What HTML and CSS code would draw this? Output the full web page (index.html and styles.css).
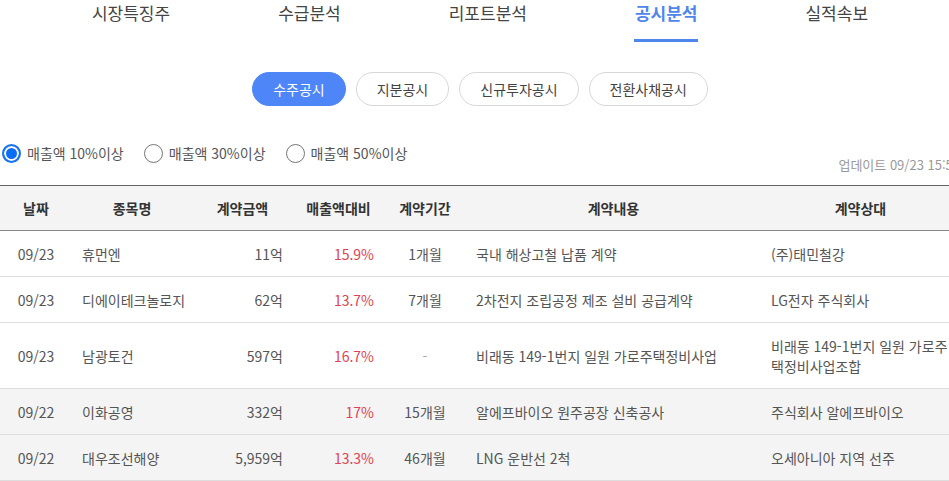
FILE: index.html
```html
<!DOCTYPE html>
<html lang="ko">

<head>
    <meta charset="UTF-8">
    <meta name="viewport" content="width=device-width, initial-scale=1.0">
    <title>공시분석</title>
    <link rel="stylesheet" href="styles.css">
</head>

<body>
    <div class="wrap">
        <ul class="tabs">
            <li>시장특징주</li>
            <li>수급분석</li>
            <li>리포트분석</li>
            <li class="on">공시분석</li>
            <li>실적속보</li>
        </ul>

        <div class="pills">
            <button class="pill on">수주공시</button>
            <button class="pill">지분공시</button>
            <button class="pill">신규투자공시</button>
            <button class="pill">전환사채공시</button>
        </div>

        <div class="filter">
            <div class="radios">
                <label class="radio"><input type="radio" name="rate" checked> 매출액 10%이상</label>
                <label class="radio"><input type="radio" name="rate"> 매출액 30%이상</label>
                <label class="radio"><input type="radio" name="rate"> 매출액 50%이상</label>
            </div>
            <span class="update">업데이트 09/23 15:54</span>
        </div>

        <table class="list">
            <colgroup>
                <col class="w-date">
                <col class="w-name">
                <col class="w-amt">
                <col class="w-rate">
                <col class="w-term">
                <col class="w-desc">
                <col class="w-party">
            </colgroup>
            <thead>
                <tr>
                    <th>날짜</th>
                    <th>종목명</th>
                    <th>계약금액</th>
                    <th>매출액대비</th>
                    <th>계약기간</th>
                    <th>계약내용</th>
                    <th>계약상대</th>
                </tr>
            </thead>
            <tbody>
                <tr>
                    <td class="c">09/23</td>
                    <td class="nw">휴먼엔</td>
                    <td class="r">11억</td>
                    <td class="r up">15.9%</td>
                    <td class="c">1개월</td>
                    <td>국내 해상고철 납품 계약</td>
                    <td>(주)태민철강</td>
                </tr>
                <tr>
                    <td class="c">09/23</td>
                    <td class="nw">디에이테크놀로지</td>
                    <td class="r">62억</td>
                    <td class="r up">13.7%</td>
                    <td class="c">7개월</td>
                    <td>2차전지 조립공정 제조 설비 공급계약</td>
                    <td>LG전자 주식회사</td>
                </tr>
                <tr>
                    <td class="c">09/23</td>
                    <td class="nw">남광토건</td>
                    <td class="r">597억</td>
                    <td class="r up">16.7%</td>
                    <td class="c dash">-</td>
                    <td>비래동 149-1번지 일원 가로주택정비사업</td>
                    <td>비래동 149-1번지 일원 가로주택정비사업조합</td>
                </tr>
                <tr class="gray">
                    <td class="c">09/22</td>
                    <td class="nw">이화공영</td>
                    <td class="r">332억</td>
                    <td class="r up">17%</td>
                    <td class="c">15개월</td>
                    <td>알에프바이오 원주공장 신축공사</td>
                    <td>주식회사 알에프바이오</td>
                </tr>
                <tr class="gray">
                    <td class="c">09/22</td>
                    <td class="nw">대우조선해양</td>
                    <td class="r">5,959억</td>
                    <td class="r up">13.3%</td>
                    <td class="c">46개월</td>
                    <td>LNG 운반선 2척</td>
                    <td>오세아니아 지역 선주</td>
                </tr>
            </tbody>
        </table>
    </div>
</body>

</html>
```

FILE: styles.css
```css
body {
    margin: 0;
    overflow: hidden;
    font-family: "Noto Sans CJK KR", "Noto Sans", sans-serif;
    color: #555;
    background: #fff;
}

.wrap {
    width: 960px;
}

.tabs {
    display: flex;
    justify-content: center;
    gap: 106px;
    margin: 0;
    padding: 0;
    list-style: none;
}

.tabs li {
    height: 39px;
    padding: 0 1px;
    font-size: 17px;
    line-height: 26px;
    color: #444;
    border-bottom: 3px solid transparent;
}

.tabs li.on {
    color: #4f86ec;
    font-weight: bold;
    border-bottom-color: #4f86ec;
}

.pills {
    display: flex;
    justify-content: center;
    gap: 10px;
    margin-top: 30px;
}

.pill {
    height: 34px;
    padding: 0 20px;
    border: 1px solid #d8d8d8;
    border-radius: 17px;
    background: #fff;
    font-family: inherit;
    font-size: 14px;
    color: #444;
}

.pill.on {
    background: #4f86f7;
    border-color: #4f86f7;
    color: #fff;
}

.filter {
    display: flex;
    justify-content: space-between;
    align-items: flex-start;
    height: 42px;
    margin-top: 37px;
}

.radios {
    display: flex;
    gap: 20px;
    padding-left: 2px;
}

.radio {
    display: flex;
    align-items: center;
    gap: 6px;
    font-size: 14px;
    line-height: 20px;
    color: #555;
}

.radio input {
    appearance: none;
    width: 19px;
    height: 19px;
    margin: 0;
    border: 1px solid #767676;
    border-radius: 50%;
    background: #fff;
}

.radio input:checked {
    border: 2px solid #1a73e8;
    box-shadow: inset 0 0 0 2px #fff;
    background: #0b6cf5;
}

.update {
    margin-top: 13px;
    font-size: 13px;
    line-height: 18px;
    color: #999;
}

.list {
    width: 960px;
    table-layout: fixed;
    border-collapse: collapse;
    border-top: 1px solid #666;
    font-size: 14px;
}

.w-date { width: 72px; }
.w-name { width: 120px; }
.w-amt { width: 101px; }
.w-rate { width: 91px; }
.w-term { width: 82px; }
.w-desc { width: 295px; }
.w-party { width: 199px; }

.list th {
    height: 44px;
    padding: 0 10px;
    background: #f4f4f4;
    border-bottom: 1px solid #888;
    color: #333;
    font-weight: bold;
    line-height: 20px;
}

.list td {
    padding: 13px 10px 12px;
    line-height: 20px;
    border-bottom: 1px solid #ddd;
    text-align: left;
}

.list td.nw {
    white-space: nowrap;
    padding-right: 0;
}

.list td.c {
    text-align: center;
}

.list td.r {
    text-align: right;
}

.list td.up {
    color: #e0434f;
}

.list td.dash {
    color: #aaa;
}

.list tr.gray td {
    background: #f4f4f4;
}
```
